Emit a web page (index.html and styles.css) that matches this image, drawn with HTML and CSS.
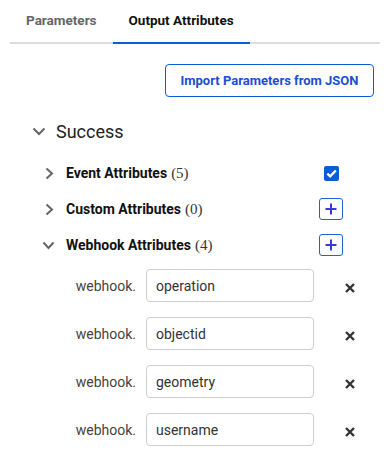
FILE: index.html
```html
<!DOCTYPE html>
<html>
<head>
<meta charset="utf-8">
<link rel="stylesheet" href="styles.css">
</head>
<body>
<div class="panel">
  <div class="tabs">
    <div class="tab">Parameters</div>
    <div class="tab active">Output Attributes</div>
  </div>
  <div class="actions">
    <button class="import-btn">Import Parameters from JSON</button>
  </div>
  <div class="section-head">
    <svg class="chev-big" width="14" height="9" viewBox="0 0 14 9"><path d="M1.5 1.5 L7 7 L12.5 1.5" fill="none" stroke="#666" stroke-width="2"/></svg>
    <span class="section-title">Success</span>
  </div>
  <div class="group">
    <div class="grow">
      <svg class="chev-r" width="9" height="13" viewBox="0 0 9 13"><path d="M1.5 1.5 L7 6.5 L1.5 11.5" fill="none" stroke="#666" stroke-width="2"/></svg>
      <span class="glabel">Event Attributes</span><span class="count">(5)</span>
      <span class="spacer"></span>
      <span class="checkbox"><svg width="11" height="9" viewBox="0 0 11 9"><path d="M1.3 4.6 L4.2 7.3 L9.8 1.5" fill="none" stroke="#fff" stroke-width="2.4"/></svg></span>
    </div>
    <div class="grow">
      <svg class="chev-r" width="9" height="13" viewBox="0 0 9 13"><path d="M1.5 1.5 L7 6.5 L1.5 11.5" fill="none" stroke="#666" stroke-width="2"/></svg>
      <span class="glabel">Custom Attributes</span><span class="count">(0)</span>
      <span class="spacer"></span>
      <span class="plus"><svg width="12" height="12" viewBox="0 0 12 12"><path d="M6 0.5 V11.5 M0.5 6 H11.5" stroke="#3a3ad8" stroke-width="2"/></svg></span>
    </div>
    <div class="grow">
      <svg class="chev-d" width="13" height="9" viewBox="0 0 13 9"><path d="M1.5 1.5 L6.5 7 L11.5 1.5" fill="none" stroke="#666" stroke-width="2"/></svg>
      <span class="glabel">Webhook Attributes</span><span class="count">(4)</span>
      <span class="spacer"></span>
      <span class="plus"><svg width="12" height="12" viewBox="0 0 12 12"><path d="M6 0.5 V11.5 M0.5 6 H11.5" stroke="#3a3ad8" stroke-width="2"/></svg></span>
    </div>
    <div class="fields">
      <div class="field">
        <span class="prefix">webhook.</span>
        <input class="inp" type="text" value="operation">
        <svg class="del" width="10" height="10" viewBox="0 0 10 10"><path d="M1 1 L9 9 M9 1 L1 9" stroke="#333" stroke-width="2.4"/></svg>
      </div>
      <div class="field">
        <span class="prefix">webhook.</span>
        <input class="inp" type="text" value="objectid">
        <svg class="del" width="10" height="10" viewBox="0 0 10 10"><path d="M1 1 L9 9 M9 1 L1 9" stroke="#333" stroke-width="2.4"/></svg>
      </div>
      <div class="field">
        <span class="prefix">webhook.</span>
        <input class="inp" type="text" value="geometry">
        <svg class="del" width="10" height="10" viewBox="0 0 10 10"><path d="M1 1 L9 9 M9 1 L1 9" stroke="#333" stroke-width="2.4"/></svg>
      </div>
      <div class="field">
        <span class="prefix">webhook.</span>
        <input class="inp" type="text" value="username">
        <svg class="del" width="10" height="10" viewBox="0 0 10 10"><path d="M1 1 L9 9 M9 1 L1 9" stroke="#333" stroke-width="2.4"/></svg>
      </div>
    </div>
  </div>
</div>
</body>
</html>
```
FILE: styles.css
```css
* { box-sizing: border-box; }
body {
  margin: 0;
  background: #fff;
  font-family: Roboto, "Liberation Sans", Arial, sans-serif;
  color: #111;
}
.panel {
  width: 389px;
  padding: 0 9px 0 10px;
}
.tabs {
  display: flex;
  border-bottom: 2px solid #dcdcdc;
  height: 44px;
}
.tab {
  padding: 0 16px;
  height: 44px;
  line-height: 40px;
  font-size: 13.5px;
  font-weight: 700;
  color: #666;
  margin-bottom: -2px;
  border-bottom: 2px solid transparent;
}
.tab.active {
  color: #111;
  border-bottom-color: #0b5cd5;
}
.actions {
  display: flex;
  justify-content: flex-end;
  padding: 20px 6px 0 0;
}
.import-btn {
  width: 209px;
  height: 33px;
  border: 1px solid #0b5cd5;
  border-radius: 4px;
  background: #fff;
  color: #1a4fd0;
  font-family: Roboto, "Liberation Sans", Arial, sans-serif;
  font-size: 13px;
  font-weight: 700;
  padding: 0;
}
.section-head {
  display: flex;
  align-items: center;
  height: 26px;
  margin-top: 21px;
  padding-left: 22px;
}
.chev-big { margin-right: 10px; margin-top: 1px; }
.section-title {
  font-size: 18px;
  color: #222;
}
.group {
  padding-left: 34px;
  margin-top: 17px;
}
.grow {
  display: flex;
  align-items: center;
  height: 24px;
  margin-bottom: 12px;
}
.chev-r { margin-left: 1px; margin-right: 12px; }
.chev-d { margin-left: -2px; margin-right: 11px; }
.glabel {
  font-size: 14px;
  font-weight: 700;
  color: #111;
}
.count {
  font-family: "Liberation Serif", "Times New Roman", serif;
  font-size: 15px;
  color: #333;
  margin-left: 4px;
}
.spacer { flex: 1; }
.checkbox {
  width: 15px;
  height: 15px;
  background: #0b5cd5;
  border-radius: 2px;
  display: flex;
  align-items: center;
  justify-content: center;
  margin-right: 41px;
}
.plus {
  width: 24px;
  height: 22px;
  border: 1.5px solid #1f63d6;
  border-radius: 3px;
  display: flex;
  align-items: center;
  justify-content: center;
  margin-right: 37px;
}
.fields {
  display: flex;
  flex-direction: column;
  gap: 15px;
}
.field {
  display: flex;
  align-items: center;
  height: 33px;
}
.prefix {
  width: 102px;
  text-align: right;
  padding-right: 10px;
  font-size: 14px;
  color: #444;
}
.inp {
  width: 168px;
  height: 33px;
  border: 1px solid #cfcfcf;
  border-radius: 4px;
  padding: 0 9px;
  font-family: Roboto, "Liberation Sans", Arial, sans-serif;
  font-size: 14px;
  color: #333;
  outline: none;
}
.del { margin-left: 31px; margin-top: 4px; }
```
